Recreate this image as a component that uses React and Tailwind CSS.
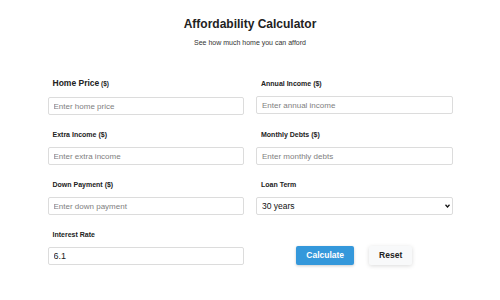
import React, { useState } from 'react';

const inputCls =
    'block w-full h-[18px] px-[5px] text-[8px] text-[#222] border border-[#dcdcdc] rounded-[2px] bg-white outline-none placeholder:text-[#808080]';

function Field({ label, unit, big, children }) {
    return (
        <div className="flex flex-col">
            <label className={`ml-[5px] mb-[8px] font-bold text-[#222] ${big ? 'text-[8.5px] leading-[10px]' : 'text-[7px] leading-[9px]'}`}>
                {label}
                {unit && <span className={big ? 'text-[6.5px]' : ''}> {unit}</span>}
            </label>
            {children}
        </div>
    );
}

export default function App() {
    const [rate, setRate] = useState('6.1');

    return (
        <div className="w-[500px] h-[300px] bg-white overflow-hidden" style={{ fontFamily: '"Liberation Sans", Arial, sans-serif' }}>
            <div className="w-[405px] mx-auto">
                <div className="text-center">
                    <h1 className="mt-[17px] text-[12px] leading-[14px] font-bold text-[#222]">Affordability Calculator</h1>
                    <p className="mt-[7px] text-[7px] leading-[9px] text-[#333]">See how much home you can afford</p>
                </div>

                <div className="mt-[31px] grid grid-cols-2 gap-x-[12px] gap-y-[15px]">
                    <Field label="Home Price" unit="($)" big>
                        <input className={inputCls} placeholder="Enter home price" />
                    </Field>
                    <div className="flex flex-col justify-end">
                        <Field label="Annual Income" unit="($)">
                            <input className={inputCls} placeholder="Enter annual income" />
                        </Field>
                        <div className="h-[1px]"></div>
                    </div>
                    <Field label="Extra Income" unit="($)">
                        <input className={inputCls} placeholder="Enter extra income" />
                    </Field>
                    <Field label="Monthly Debts" unit="($)">
                        <input className={inputCls} placeholder="Enter monthly debts" />
                    </Field>
                    <Field label="Down Payment" unit="($)">
                        <input className={inputCls} placeholder="Enter down payment" />
                    </Field>
                    <Field label="Loan Term">
                        <div className="relative h-[18px]">
                            <select className="block appearance-none w-full h-[18px] pl-[5px] pr-[12px] text-[8.5px] text-[#111] border border-[#dcdcdc] rounded-[2px] bg-white outline-none" defaultValue="30">
                                <option value="30">30 years</option>
                                <option value="20">20 years</option>
                                <option value="15">15 years</option>
                            </select>
                            <svg className="absolute right-[3px] top-[7px] pointer-events-none" width="5" height="4" viewBox="0 0 10 8">
                                <path d="M1 1.5 L5 6 L9 1.5" fill="none" stroke="#111" strokeWidth="2.4" />
                            </svg>
                        </div>
                    </Field>
                    <Field label="Interest Rate">
                        <input className={`${inputCls} text-[9px]`} value={rate} onChange={(e) => setRate(e.target.value)} />
                    </Field>
                    <div className="flex items-end justify-center gap-[15px]">
                        <button className="h-[19px] px-[10px] text-[8.5px] font-bold text-white bg-[#3498db] rounded-[2px] shadow-[0_1px_3px_rgba(0,0,0,0.2)]">
                            Calculate
                        </button>
                        <button className="h-[19px] px-[10px] text-[8.5px] font-bold text-[#222] bg-[#f8f9fa] rounded-[2px] shadow-[0_1px_4px_rgba(0,0,0,0.15)]">
                            Reset
                        </button>
                    </div>
                </div>
            </div>
        </div>
    );
}
